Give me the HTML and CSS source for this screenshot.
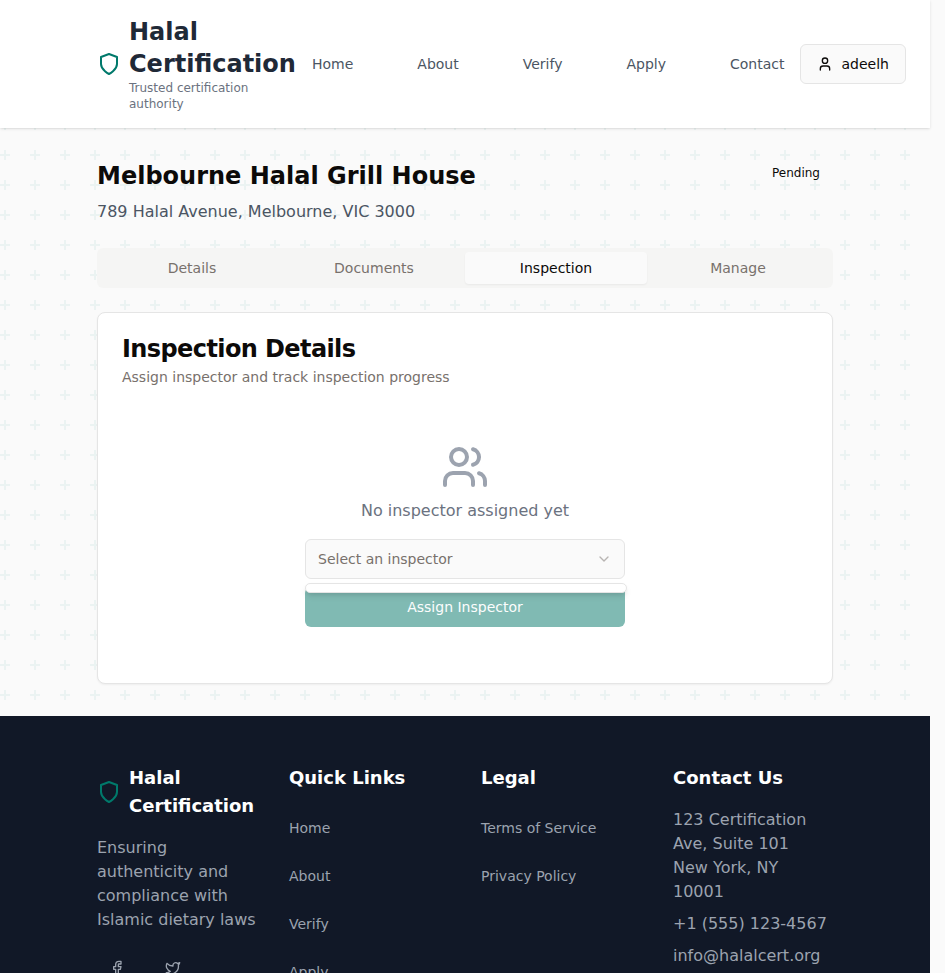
FILE: index.html
```html
<!DOCTYPE html>
<html lang="en">
<head>
<meta charset="utf-8">
<title>Halal Certification</title>
<link rel="stylesheet" href="styles.css">
</head>
<body>
<div class="page">
  <header class="header">
    <div class="brand">
      <svg class="icon shield" viewBox="0 0 24 24"><path d="M12 22s8-4 8-10V5l-8-3-8 3v7c0 6 8 10 8 10"/></svg>
      <div class="brand-text">
        <div class="brand-name">Halal Certification</div>
        <div class="brand-tag">Trusted certification authority</div>
      </div>
    </div>
    <nav class="nav"><a>Home</a><a>About</a><a>Verify</a><a>Apply</a><a>Contact</a></nav>
    <button class="user">
      <svg class="icon small" viewBox="0 0 24 24"><path d="M19 21v-2a4 4 0 0 0-4-4H9a4 4 0 0 0-4 4v2"/><circle cx="12" cy="7" r="4"/></svg>
      adeelh
    </button>
  </header>
  <main class="main">
    <div class="heading">
      <div>
        <h1>Melbourne Halal Grill House</h1>
        <p class="address">789 Halal Avenue, Melbourne, VIC 3000</p>
      </div>
      <span class="status">Pending</span>
    </div>
    <div class="tabs">
      <button class="tab">Details</button>
      <button class="tab">Documents</button>
      <button class="tab active">Inspection</button>
      <button class="tab">Manage</button>
    </div>
    <section class="card">
      <h2>Inspection Details</h2>
      <p class="description">Assign inspector and track inspection progress</p>
      <div class="empty">
        <svg class="icon users" viewBox="0 0 24 24"><path d="M16 21v-2a4 4 0 0 0-4-4H6a4 4 0 0 0-4 4v2"/><circle cx="9" cy="7" r="4"/><path d="M22 21v-2a4 4 0 0 0-3-3.87"/><path d="M16 3.13a4 4 0 0 1 0 7.75"/></svg>
        <p class="empty-text">No inspector assigned yet</p>
        <div class="picker">
          <button class="select"><span>Select an inspector</span>
            <svg class="icon small chevron" viewBox="0 0 24 24"><path d="m6 9 6 6 6-6"/></svg>
          </button>
          <div class="options"></div>
          <button class="assign">Assign Inspector</button>
        </div>
      </div>
    </section>
  </main>
  <footer class="footer">
    <div class="col">
      <div class="foot-brand">
        <svg class="icon shield" viewBox="0 0 24 24"><path d="M12 22s8-4 8-10V5l-8-3-8 3v7c0 6 8 10 8 10"/></svg>
        <h3>Halal Certification</h3>
      </div>
      <p class="mission">Ensuring authenticity and compliance with Islamic dietary laws</p>
      <div class="social">
        <svg class="icon small" viewBox="0 0 24 24"><path d="M18 2h-3a5 5 0 0 0-5 5v3H7v4h3v8h4v-8h3l1-4h-4V7a1 1 0 0 1 1-1h3z"/></svg>
        <svg class="icon small" viewBox="0 0 24 24"><path d="M22 4s-.7 2.1-2 3.4c1.6 10-9.4 17.3-18 11.6 2.2.1 4.4-.6 6-2C3 15.5.5 9.6 3 5c2.2 2.6 5.6 4.1 9 4-.9-4.2 4-6.6 7-3.8 1.1 0 3-1.2 3-1.2z"/></svg>
      </div>
    </div>
    <div class="col">
      <h3>Quick Links</h3>
      <div class="links"><a>Home</a><a>About</a><a>Verify</a><a>Apply</a></div>
    </div>
    <div class="col">
      <h3>Legal</h3>
      <div class="links"><a>Terms of Service</a><a>Privacy Policy</a></div>
    </div>
    <div class="col">
      <h3>Contact Us</h3>
      <div class="contact"><p>123 Certification Ave, Suite 101</p><p>New York, NY 10001</p><p class="spaced">+1 (555) 123-4567</p><p class="spaced">info@halalcert.org</p></div>
    </div>
  </footer>
</div>
</body>
</html>
```

FILE: styles.css
```css
* { box-sizing: border-box; margin: 0; padding: 0; }
html, body { height: 973px; overflow: hidden; }
body { background: #fafafa; color: #0c0a09; font: 16px/24px "DejaVu Sans", sans-serif; }
button { font: inherit; color: inherit; border: 0; background: none; }
.page {
  width: 930px;
  background-image: url("data:image/svg+xml,%3Csvg xmlns='http://www.w3.org/2000/svg' width='30' height='30'%3E%3Cpath d='M6 4V0H4v4H0v2h4v4h2V6h4V4H6z' fill='%2300897b' fill-opacity='.06'/%3E%3C/svg%3E");
}
.icon { width: 24px; height: 24px; flex: none; display: block; fill: none; stroke: currentColor; stroke-width: 2; stroke-linecap: round; stroke-linejoin: round; }
.icon.small { width: 16px; height: 16px; }
.shield { color: #00796b; }

.header { height: 128px; padding-left: 97px; display: flex; align-items: center; background: #fff; box-shadow: 0 1px 3px rgba(0,0,0,.1), 0 1px 2px -1px rgba(0,0,0,.1); }
.brand { display: flex; align-items: center; gap: 8px; width: 199px; }
.brand-text { width: 167px; }
.brand-name { font-size: 24px; line-height: 32px; font-weight: 700; color: #1f2937; }
.brand-tag { font-size: 12px; line-height: 16px; color: #6b7280; }
.nav { display: flex; gap: 64px; margin-left: 16px; font-size: 14px; color: #4b5563; }
.user { display: flex; align-items: center; gap: 8px; height: 40px; margin-left: 16px; padding: 0 16px; border: 1px solid #e5e5e5; border-radius: 6px; background: #fafafa; font-size: 14px; }

.main { padding: 32px 97px; }
.heading { display: flex; justify-content: space-between; height: 64px; }
h1 { font-size: 24px; line-height: 32px; }
.address { margin-top: 8px; color: #4b5563; }
.status { margin-top: 5px; padding-right: 13px; font-size: 12px; line-height: 16px; }
.tabs { display: grid; grid-template-columns: repeat(4, 1fr); height: 40px; margin-top: 24px; padding: 4px; background: #f5f5f4; border-radius: 6px; }
.tab { font-size: 14px; line-height: 20px; color: #78716c; border-radius: 4px; }
.tab.active { background: #fafafa; color: #0c0a09; box-shadow: 0 1px 2px rgba(0,0,0,.05); }
.card { height: 372px; margin-top: 24px; padding: 24px; background: #fff; border: 1px solid #e5e5e5; border-radius: 8px; box-shadow: 0 1px 2px rgba(0,0,0,.05); }
h2 { font-size: 24px; line-height: 24px; letter-spacing: -.6px; }
.description { margin-top: 6px; font-size: 14px; line-height: 20px; color: #78716c; }
.empty { display: flex; flex-direction: column; align-items: center; padding-top: 56px; }
.users { width: 48px; height: 48px; color: #9ca3af; }
.empty-text { margin-top: 8px; color: #6b7280; }
.picker { position: relative; width: 320px; margin-top: 16px; font-size: 14px; line-height: 20px; }
.select { display: flex; align-items: center; justify-content: space-between; width: 100%; height: 40px; padding: 0 12px; border: 1px solid #e5e5e5; border-radius: 6px; background: #fafafa; color: #78716c; }
.chevron { opacity: .5; }
.options { position: absolute; top: 44px; left: 0; width: 322px; height: 10px; background: #fff; border: 1px solid #e5e5e5; border-radius: 6px; box-shadow: 0 4px 6px -1px rgba(0,0,0,.1), 0 2px 4px -2px rgba(0,0,0,.1); }
.assign { width: 100%; height: 40px; margin-top: 8px; border-radius: 6px; background: #80bab3; color: #fcfdfd; }

.footer { display: grid; grid-template-columns: repeat(4, 160px); gap: 32px; height: 257px; padding: 48px 97px 0; overflow: hidden; background: #111827; color: #9ca3af; }
h3 { font-size: 18px; line-height: 28px; color: #fff; }
.foot-brand { display: flex; align-items: center; gap: 8px; }
.mission { margin-top: 16px; }
.social { display: flex; gap: 40px; margin-top: 28px; padding-left: 12px; }
.links { display: flex; flex-direction: column; gap: 28px; margin-top: 26px; font-size: 14px; line-height: 20px; }
.contact { margin-top: 16px; }
.spaced { margin-top: 8px; white-space: nowrap; }
```
